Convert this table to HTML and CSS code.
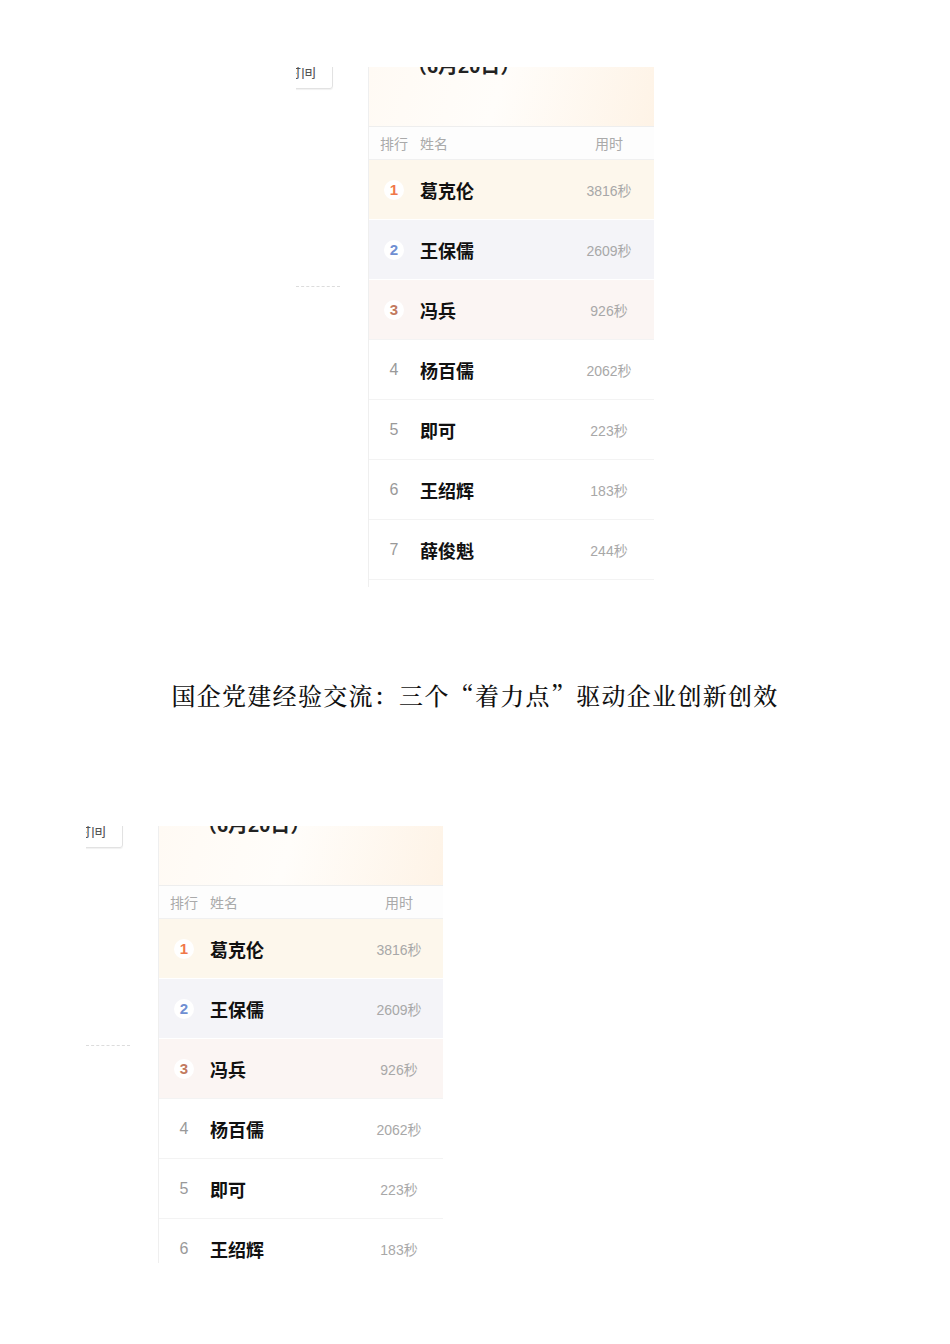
FILE: index.html
```html
<!DOCTYPE html>
<html lang="zh-CN">
<head>
    <meta charset="UTF-8">
    <meta name="viewport" content="width=device-width, initial-scale=1.0">
    <title>国企党建经验交流</title>
    <link rel="stylesheet" href="styles.css">
</head>
<body>
    <div class="page">

        <div class="shot shot-top">
            <div class="stub">
                <div class="stub-btn">时间</div>
                <div class="stub-dash"></div>
            </div>
            <div class="board">
                <div class="board-head">
                    <div class="board-title">（6月20日）</div>
                </div>
                <div class="cols">
                    <span class="col-rank">排行</span>
                    <span class="col-name">姓名</span>
                    <span class="col-time">用时</span>
                </div>
                <div class="row row-1"><span class="rank">1</span><span class="name">葛克伦</span><span class="time">3816秒</span></div>
                <div class="row row-2"><span class="rank">2</span><span class="name">王保儒</span><span class="time">2609秒</span></div>
                <div class="row row-3"><span class="rank">3</span><span class="name">冯兵</span><span class="time">926秒</span></div>
                <div class="row"><span class="rank">4</span><span class="name">杨百儒</span><span class="time">2062秒</span></div>
                <div class="row"><span class="rank">5</span><span class="name">即可</span><span class="time">223秒</span></div>
                <div class="row"><span class="rank">6</span><span class="name">王绍辉</span><span class="time">183秒</span></div>
                <div class="row"><span class="rank">7</span><span class="name">薛俊魁</span><span class="time">244秒</span></div>
            </div>
        </div>

        <h2 class="headline">国企党建经验交流：三个“着力点”驱动企业创新创效</h2>

        <div class="shot shot-bottom">
            <div class="stub">
                <div class="stub-btn">时间</div>
                <div class="stub-dash"></div>
            </div>
            <div class="board">
                <div class="board-head">
                    <div class="board-title">（6月20日）</div>
                </div>
                <div class="cols">
                    <span class="col-rank">排行</span>
                    <span class="col-name">姓名</span>
                    <span class="col-time">用时</span>
                </div>
                <div class="row row-1"><span class="rank">1</span><span class="name">葛克伦</span><span class="time">3816秒</span></div>
                <div class="row row-2"><span class="rank">2</span><span class="name">王保儒</span><span class="time">2609秒</span></div>
                <div class="row row-3"><span class="rank">3</span><span class="name">冯兵</span><span class="time">926秒</span></div>
                <div class="row"><span class="rank">4</span><span class="name">杨百儒</span><span class="time">2062秒</span></div>
                <div class="row"><span class="rank">5</span><span class="name">即可</span><span class="time">223秒</span></div>
                <div class="row"><span class="rank">6</span><span class="name">王绍辉</span><span class="time">183秒</span></div>
            </div>
        </div>

    </div>
</body>
</html>
```

FILE: styles.css
```css
body {
    margin: 0;
    padding: 0;
    background-color: #fff;
    font-family: "Liberation Sans", "Noto Sans CJK SC", sans-serif;
}

.page {
    padding-top: 67px;
}

.shot {
    display: flex;
    overflow: hidden;
}

.shot-top {
    margin-left: 296px;
    width: 358px;
    height: 520px;
}

.shot-bottom {
    margin-left: 86px;
    width: 357px;
    height: 437px;
    margin-top: 114px;
}

.stub {
    width: 72px;
    flex-shrink: 0;
    display: flex;
    flex-direction: column;
}

.stub-btn {
    width: 64px;
    height: 34px;
    margin-top: -12px;
    margin-left: -27px;
    border: 1px solid #e2e2e2;
    border-radius: 3px;
    box-shadow: 0 1px 1px rgba(0, 0, 0, 0.06);
    box-sizing: border-box;
    font-size: 15px;
    line-height: 32px;
    text-align: center;
    color: #555;
}

.stub-dash {
    width: 44px;
    margin-top: 197px;
    border-top: 1px dashed #dcdcdc;
}

.board {
    width: 286px;
    flex-shrink: 0;
    border-left: 1px solid #efefef;
    background-color: #fff;
}

.board-head {
    display: flow-root;
    height: 59px;
    border-bottom: 1px solid #eeeeee;
    background: linear-gradient(105deg, #fffaf4 0%, #fffdfa 45%, #fef3e6 100%);
}

.board-title {
    margin-top: -11px;
    margin-left: 38px;
    font-size: 20px;
    line-height: 20px;
    font-weight: bold;
    color: #222;
}

.cols {
    height: 32px;
    display: flex;
    align-items: center;
    padding-left: 11px;
    border-bottom: 1px solid #f0f0f0;
    font-size: 14px;
    color: #aaa;
    background-color: #fdfdfd;
}

.col-name {
    margin-left: 12px;
    flex: 1;
}

.col-time {
    width: 60px;
    margin-right: 16px;
    text-align: center;
}

.row {
    height: 59px;
    display: flex;
    align-items: center;
    border-bottom: 1px solid #f3f3f3;
}

.row-1 {
    background-color: #fdf7ec;
    border-bottom-color: #fff;
}

.row-2 {
    background-color: #f4f4f8;
    border-bottom-color: #fff;
}

.row-3 {
    background-color: #fbf5f3;
}

.rank {
    width: 20px;
    height: 20px;
    margin-left: 15px;
    border-radius: 50%;
    line-height: 20px;
    text-align: center;
    font-size: 16px;
    color: #999;
}

.row-1 .rank,
.row-2 .rank,
.row-3 .rank {
    background-color: #fff;
    font-weight: bold;
    font-size: 15px;
}

.row-1 .rank {
    color: #f0784a;
}

.row-2 .rank {
    color: #6f8fd2;
}

.row-3 .rank {
    color: #c27a60;
}

.name {
    margin-left: 16px;
    flex: 1;
    font-size: 18px;
    font-weight: bold;
    color: #111;
}

.time {
    width: 60px;
    margin-right: 16px;
    text-align: center;
    font-size: 14px;
    color: #a8a8a8;
}

.headline {
    margin: 91px 0 0;
    text-align: center;
    font-family: "Noto Serif CJK SC", "Noto Sans CJK SC", serif;
    font-size: 24px;
    line-height: 34px;
    letter-spacing: 1.3px;
    font-weight: 500;
    color: #111;
}
```
